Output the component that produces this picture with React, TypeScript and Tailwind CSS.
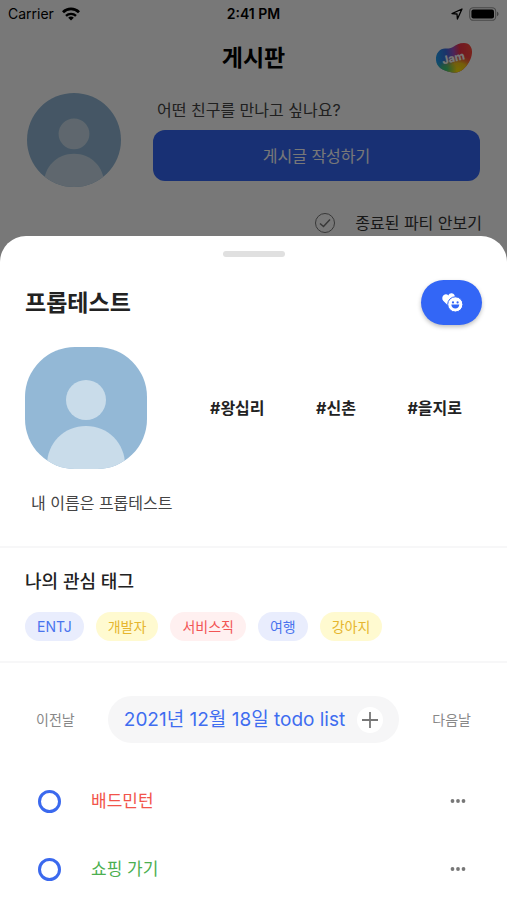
import React from "react";

function Avatar({ className }: { className: string }) {
  return (
    <svg viewBox="0 0 122 122" role="img" aria-label="프로필 사진" className={className}>
      <rect width="122" height="122" fill="#93b8d6" />
      <circle cx="61" cy="53" r="20" fill="#c9dcea" />
      <path d="M22 122v-4c0-22 17-39 39-39s39 17 39 39v4z" fill="#c9dcea" />
    </svg>
  );
}

function StatusBar() {
  return (
    <div className="grid h-7 grid-cols-3 items-center px-2 text-sm text-black">
      <div className="flex items-center gap-2">
        <span>Carrier</span>
        <svg viewBox="0 0 18 14" className="h-[14px] w-[18px]" fill="none" stroke="#000" strokeWidth="2.8">
          <path d="M1 5.2a11.4 11.4 0 0 1 16 0" />
          <path d="M4 8.9a7.2 7.2 0 0 1 10 0" strokeWidth="2.4" />
          <path d="M9 13.6l-2.8-2.8a3.9 3.9 0 0 1 5.600 0z" fill="#000" stroke="none" />
        </svg>
      </div>
      <span className="text-center font-semibold">2:41 PM</span>
      <div className="flex items-center justify-end gap-[6px]">
        <svg viewBox="0 0 12 12" className="size-3" fill="none" stroke="#000" strokeWidth="1.3" strokeLinejoin="round">
          <path d="M11 1L1 5.6l5 .4.4 5z" />
        </svg>
        <svg viewBox="0 0 30 14" className="h-[14px] w-[30px]">
          <rect x="0.7" y="0.7" width="26" height="12.6" rx="3.6" fill="none" stroke="#000" strokeOpacity="0.4" strokeWidth="1.1" />
          <rect x="2.4" y="2.4" width="22.6" height="9.2" rx="2" />
          <path d="M28 4.800c2 .6 2 3.800 0 4.400z" fillOpacity="0.45" />
        </svg>
      </div>
    </div>
  );
}

function JamLogo() {
  return (
    <svg viewBox="0 0 38 32" className="h-8 w-[38px]" role="img" aria-label="Jam">
      <defs>
        <linearGradient id="jamBase" x1="0" y1="0.5" x2="1" y2="0.4">
          <stop offset="0" stopColor="#1fa0ee" />
          <stop offset="0.3" stopColor="#3a6be0" />
          <stop offset="0.5" stopColor="#a04fc0" />
          <stop offset="0.68" stopColor="#f0324a" />
          <stop offset="1" stopColor="#ff4a3c" />
        </linearGradient>
        <radialGradient id="jamYellow" cx="0.62" cy="0.95" r="0.55">
          <stop offset="0" stopColor="#ffe800" />
          <stop offset="0.5" stopColor="#f9cf14" stopOpacity="0.95" />
          <stop offset="1" stopColor="#f58a20" stopOpacity="0" />
        </radialGradient>
        <radialGradient id="jamGreen" cx="0.26" cy="0.88" r="0.32">
          <stop offset="0" stopColor="#2fcf7a" />
          <stop offset="1" stopColor="#2fcf7a" stopOpacity="0" />
        </radialGradient>
        <filter id="jamSoft" x="-10%" y="-10%" width="120%" height="120%">
          <feGaussianBlur stdDeviation="0.7" />
        </filter>
      </defs>
      <g filter="url(#jamSoft)">
        {["url(#jamBase)", "url(#jamYellow)", "url(#jamGreen)"].map((fill) => (
          <path
            key={fill}
            fill={fill}
            d="M1 18C.5 11 5 6.500 10 6.500c3 0 5 .3 8-1.500 3-2 6-4 11-4 6 0 8.500 5 8 10-.5 7-5 13-9 16.500C24.500 30.500 20 31.500 15 30 7 28 1.500 25 1 18z"
          />
        ))}
      </g>
      <text x="18.500" y="20" textAnchor="middle" transform="rotate(-14 18 17)" fontSize="11" fontWeight="800" fill="#fff">
        Jam
      </text>
    </svg>
  );
}

function Board() {
  return (
    <div className="pb-[25px]">
      <StatusBar />
      <header className="grid grid-cols-3 items-center px-[34px] py-3">
        <h1 className="col-start-2 text-center text-[23px] leading-9 font-bold text-black">게시판</h1>
        <div className="flex justify-end">
          <JamLogo />
        </div>
      </header>
      <div className="flex gap-8 px-[27px] pt-[5px]">
        <Avatar className="size-[94px] rounded-full" />
        <div className="flex flex-1 flex-col gap-2 pt-[5px]">
          <p className="px-1 leading-6 text-[#444]">어떤 친구를 만나고 싶나요?</p>
          <button type="button" className="h-[51px] rounded-xl bg-[#3366f6] text-white">
            게시글 작성하기
          </button>
        </div>
      </div>
      <label className="mt-6 flex items-center justify-end gap-5 px-[25px] text-[#333]">
        <span className="grid size-5 place-items-center">
          <input type="checkbox" className="col-start-1 row-start-1 size-5 appearance-none rounded-full border border-[#777]" />
          <svg viewBox="0 0 20 20" className="col-start-1 row-start-1 size-5" fill="none" stroke="#777" strokeWidth="1.5">
            <path d="M5 10.500l3.500 3 6.500-7" />
          </svg>
        </span>
        <span className="leading-6">종료된 파티 안보기</span>
      </label>
    </div>
  );
}

function HeartSmileIcon() {
  return (
    <svg viewBox="0 0 22 20" className="h-5 w-[22px]">
      <path
        d="M8 13.500L2.200 7.800C.8 6.200 1 3.300 2.800 2 4.500.8 6.300 1.200 7.400 2.400 7.900.7 9.400 0 10.800.2c2.300.3 3.400 2.300 3 4.300L13 9z"
        fill="#fff"
      />
      <circle cx="14.300" cy="11.400" r="7.600" fill="#fff" stroke="#3366f6" strokeWidth="1" />
      <circle cx="12" cy="9.400" r="1.100" fill="#3366f6" />
      <circle cx="16.600" cy="9.400" r="1.100" fill="#3366f6" />
      <path d="M10.300 11.600h8c-.2 2.500-1.800 4-4 4s-3.800-1.500-4-4z" fill="#3366f6" />
    </svg>
  );
}

const places = ["#왕십리", "#신촌", "#을지로"];

const tags = [
  { name: "ENTJ", style: "bg-[#e9edfd] text-[#4a74ee]" },
  { name: "개발자", style: "bg-[#fffad0] text-[#e6b62e]" },
  { name: "서비스직", style: "bg-[#fff0f0] text-[#f25555]" },
  { name: "여행", style: "bg-[#e9edfd] text-[#4a74ee]" },
  { name: "강아지", style: "bg-[#fffad0] text-[#e6b62e]" },
];

const todos = [
  { name: "배드민턴", style: "text-[#f2544a]" },
  { name: "쇼핑 가기", style: "text-[#4caf50]" },
];

function ProfileSheet() {
  return (
    <main className="relative -mt-6 flex-1 rounded-t-[26px] bg-white pt-[15px]">
      <div className="mx-auto h-[6px] w-[62px] rounded-full bg-[#e0e0e0]" />

      <section className="px-[25px] pt-[23px] pb-[31px]">
        <div className="flex items-center justify-between">
          <h2 className="text-[23px] leading-8 font-bold text-[#222]">프롭테스트</h2>
          <button
            type="button"
            aria-label="친구 신청"
            className="grid h-[45px] w-[61px] place-items-center rounded-full bg-[#3366f6] shadow-[0_2px_4px_rgba(0,0,0,0.25)]"
          >
            <HeartSmileIcon />
          </button>
        </div>
        <div className="mt-[22px] flex items-center">
          <Avatar className="size-[122px] shrink-0 rounded-[50px]" />
          <ul className="flex flex-1 justify-between pr-5 pl-[63px] leading-6 font-bold text-[#222]">
            {places.map((place) => (
              <li key={place}>{place}</li>
            ))}
          </ul>
        </div>
        <p className="mt-[22px] px-[6px] leading-6 text-[#444]">내 이름은 프롭테스트</p>
      </section>

      <section className="border-y-2 border-[#f7f7f8] px-[25px] py-5">
        <h3 className="text-lg leading-7 font-medium text-[#222]">나의 관심 태그</h3>
        <ul className="mt-4 flex gap-3 text-sm">
          {tags.map((tag) => (
            <li key={tag.name} className={`flex h-[29px] items-center rounded-full px-3 ${tag.style}`}>
              {tag.name}
            </li>
          ))}
        </ul>
      </section>

      <section className="pt-[33px]">
        <div className="flex items-center justify-between px-9">
          <button type="button" className="text-sm text-[#888]">이전날</button>
          <div className="flex h-[47px] items-center gap-3 rounded-full bg-[#f6f6f7] px-4">
            <h3 className="text-[19px] leading-7 text-[#3f6df0]">2021년 12월 18일 todo list</h3>
            <button type="button" aria-label="할 일 추가" className="grid size-[26px] place-items-center rounded-full bg-white">
              <svg viewBox="0 0 18 18" className="size-[18px]" stroke="#777" strokeWidth="1.8">
                <path d="M9 1v16M1 9h16" />
              </svg>
            </button>
          </div>
          <button type="button" className="text-sm text-[#888]">다음날</button>
        </div>
        <ul className="mt-6">
          {todos.map((todo) => (
            <li key={todo.name} className="flex h-[68px] items-center justify-between pr-10 pl-[38px]">
              <label className={`flex items-center gap-[30px] text-[17px] leading-6 ${todo.style}`}>
                <input type="checkbox" className="size-[23px] appearance-none rounded-full border-[3px] border-[#3b69ee]" />
                {todo.name}
              </label>
              <button type="button" aria-label={`${todo.name} 더보기`}>
                <svg viewBox="0 0 18 6" className="h-[6px] w-[18px]" fill="#777">
                  <circle cx="3.500" cy="3" r="1.900" />
                  <circle cx="9" cy="3" r="1.900" />
                  <circle cx="14.500" cy="3" r="1.900" />
                </svg>
              </button>
            </li>
          ))}
        </ul>
      </section>
    </main>
  );
}

export default function App() {
  return (
    <div className="relative flex min-h-screen flex-col bg-white font-['Inter','Noto_Sans_CJK_KR',sans-serif]">
      <Board />
      <div className="absolute inset-0 bg-black/53" />
      <ProfileSheet />
    </div>
  );
}
